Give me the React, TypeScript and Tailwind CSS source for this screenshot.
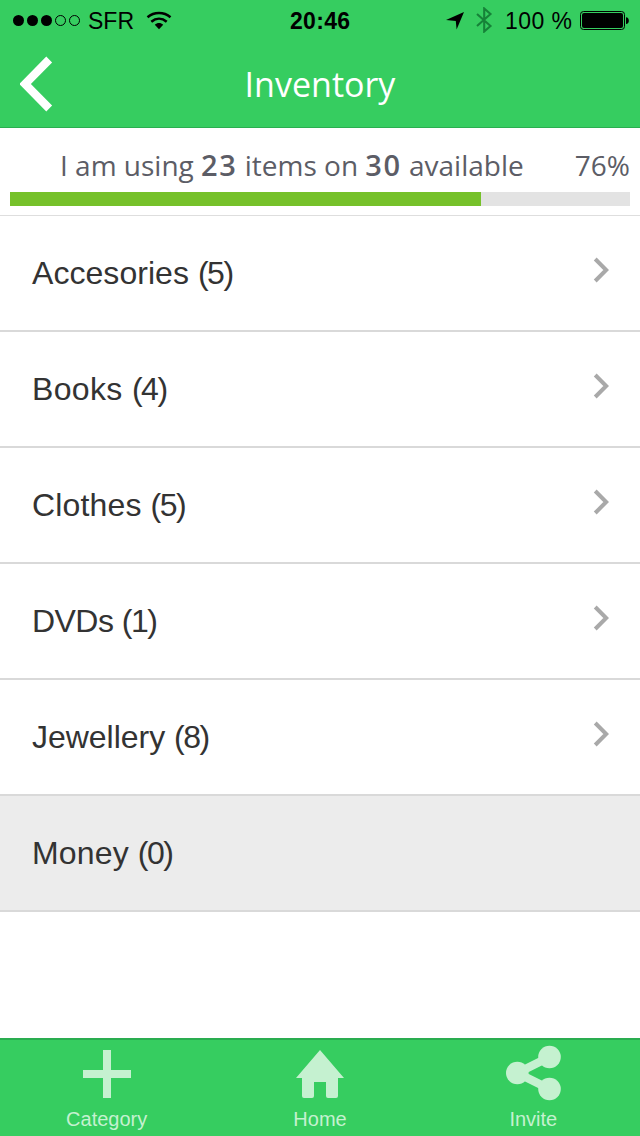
import React from "react";

const categories = [
  { name: "Accesories", count: 5, tracking: "tracking-[0.05px]" },
  { name: "Books", count: 4, tracking: "tracking-[0.35px]" },
  { name: "Clothes", count: 5, tracking: "tracking-[0.15px]" },
  { name: "DVDs", count: 1, tracking: "tracking-[-0.55px]" },
  { name: "Jewellery", count: 8, tracking: "tracking-[-0.03px]" },
  { name: "Money", count: 0, tracking: "tracking-[0.15px]" },
];

function StatusBar() {
  return (
    <div className="flex h-10 items-center whitespace-nowrap pl-[12px] text-[23px] leading-10 text-black">
      <svg className="h-[14px] w-[70px] shrink-0" viewBox="0 0 70 14" fill="none">
        <circle cx="6.5" cy="7.5" r="5.5" fill="#000" />
        <circle cx="20.5" cy="7.5" r="5.5" fill="#000" />
        <circle cx="34.5" cy="7.5" r="5.5" fill="#000" />
        <circle cx="48.5" cy="7.5" r="5" stroke="#000" />
        <circle cx="62.5" cy="7.5" r="5" stroke="#000" />
      </svg>
      <span className="ml-[6px] w-[58px] pt-[2px]">SFR</span>
      <svg className="h-[19px] w-[26px] shrink-0" viewBox="0 0 26 19" fill="none">
        <path d="M1.5 6.3C8.2.7 17.8.7 24.5 6.3" stroke="#000" strokeWidth="2.5" />
        <path d="M5.3 10.7C10 6.700 16 6.700 20.700 10.7" stroke="#000" strokeWidth="2.500" />
        <path d="M8.800 13.700c2.400-2.300 6-2.300 8.400 0L13 18.200Z" fill="#000" />
      </svg>
      <span className="ml-[118px] w-[156px] pt-[2px] font-bold tracking-[0.3px]">20:46</span>
      <svg className="h-[20px] w-[18px] shrink-0" viewBox="0 0 18 20">
        <path d="M0 10 18 2 10.6 19.5 9.8 11Z" fill="#000" />
      </svg>
      <svg className="ml-[12px] h-[26px] w-[17px] shrink-0" viewBox="0 0 17 26" fill="none">
        <path d="m1 7 13.5 12-6.3 5.5v-23L14.5 7 1 19" stroke="#168238" strokeWidth="2.1" />
      </svg>
      <span className="ml-[12px] w-[75px] pt-[2px] tracking-[0.45px]">100 %</span>
      <svg className="h-[20px] w-[50px] shrink-0" viewBox="0 0 50 20">
        <rect x=".5" y="1.5" width="44" height="18" rx="3" fill="none" stroke="#000" strokeWidth="1" />
        <rect x="2" y="3" width="41" height="15" rx="2" fill="#000" />
        <path d="M46 7.200c3.800 0 3.800 6.800 0 6.800Z" fill="#000" />
      </svg>
    </div>
  );
}

function Header() {
  return (
    <header className="h-32 border-b border-[#2aae50] bg-[#36cd60]">
      <StatusBar />
      <div className="grid h-[87px] grid-cols-[80px_1fr_80px] items-center">
        <svg className="ml-5 h-[58px] w-[33px]" viewBox="0 0 33 58" fill="none">
          <path d="M29.2 4.5 5 29l24.2 24.5" stroke="#fff" strokeWidth="8.2" />
        </svg>
        <h1 className="pt-px text-center font-['Open_Sans',sans-serif] text-[34px] leading-[87px] text-white">Inventory</h1>
      </div>
    </header>
  );
}

function Usage() {
  return (
    <section className="h-[88px] border-b border-[#dedede] px-[10px] pt-[17px]">
      <div className="flex h-[47px] justify-between whitespace-nowrap pl-[50px] font-['Open_Sans',sans-serif] text-[28px] leading-10 text-[#5c5d66]">
        <p>
          I am using <span className="text-[29px] font-semibold tracking-[1.6px]">23</span> items on{" "}
          <span className="text-[29px] font-semibold tracking-[1.6px]">30</span> available
        </p>
        <span>76%</span>
      </div>
      <div className="h-[14px] bg-[#e3e3e3]">
        <div className="h-full w-[76%] bg-[#76c12a]" />
      </div>
    </section>
  );
}

function CategoryRow({ name, count, tracking }: { name: string; count: number; tracking: string }) {
  return (
    <li
      className={`flex h-[116px] items-center justify-between border-b-2 border-[#d9d9d9] pl-8 pr-[31px] text-[32px] text-[#333] ${
        count === 0 ? "bg-[#ececec]" : "bg-white"
      }`}
    >
      <span className={`leading-10 ${tracking}`}>
        {name} <span className="tracking-[-1.5px]">({count})</span>
      </span>
      {count > 0 && (
        <svg className="mb-[6px] h-[26px] w-[16px]" viewBox="0 0 16 26" fill="none">
          <path d="m2.2 2 11 11-11 11" stroke="#a9a9a9" strokeWidth="4" />
        </svg>
      )}
    </li>
  );
}

function TabBar() {
  return (
    <nav className="grid h-[98px] grid-cols-3 border-t-2 border-[#2aad50] bg-[#36cd60] text-[20px] leading-6 text-[#c5f1d0]">
      <a className="flex flex-col items-center">
        <svg className="mt-[5px] h-[60px] w-[60px]" viewBox="0 0 60 60" fill="#c5f1d0">
          <path d="M26 5h8v20h20v8H34v20h-8V33H6v-8h20Z" />
        </svg>
        <span className="mt-[2px]">Category</span>
      </a>
      <a className="flex flex-col items-center">
        <svg className="mt-[5px] h-[60px] w-[60px]" viewBox="0 0 60 60" fill="#c5f1d0">
          <path d="m30 5 24 28h-6v18q0 2-2 2h-8q-2 0-2-2V37H24v14q0 2-2 2h-8q-2 0-2-2V33H6Z" />
        </svg>
        <span className="mt-[2px]">Home</span>
      </a>
      <a className="flex flex-col items-center">
        <svg className="mt-[5px] h-[60px] w-[60px]" viewBox="0 0 60 60" fill="#c5f1d0">
          <path d="M46.5 12 14.3 28l32.2 16" fill="none" stroke="#c5f1d0" strokeWidth="8.5" />
          <circle cx="46.5" cy="12" r="11.3" />
          <circle cx="14.3" cy="28" r="11.3" />
          <circle cx="46.5" cy="44" r="11.3" />
        </svg>
        <span className="mt-[2px]">Invite</span>
      </a>
    </nav>
  );
}

export default function App() {
  return (
    <div className="flex h-[1136px] w-[640px] flex-col overflow-hidden bg-white font-['Liberation_Sans',sans-serif]">
      <Header />
      <Usage />
      <ul className="flex-1">
        {categories.map((category) => (
          <CategoryRow key={category.name} {...category} />
        ))}
      </ul>
      <TabBar />
    </div>
  );
}
